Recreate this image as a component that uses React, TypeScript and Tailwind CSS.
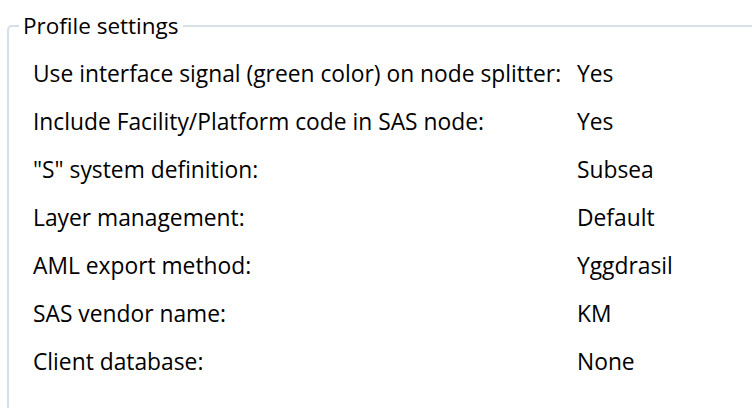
const settings = [
  { label: "Use interface signal (green color) on node splitter:", value: "Yes" },
  { label: "Include Facility/Platform code in SAS node:", value: "Yes" },
  { label: "\"S\" system definition:", value: "Subsea" },
  { label: "Layer management:", value: "Default" },
  { label: "AML export method:", value: "Yggdrasil" },
  { label: "SAS vendor name:", value: "KM" },
  { label: "Client database:", value: "None" },
];

export default function App() {
  return (
    <div
      className="w-[752px] h-[408px] overflow-hidden bg-white text-black"
      style={{ fontFamily: '"Open Sans", "Noto Sans", sans-serif' }}
    >
      <fieldset className="ml-[7px] mt-[14px] w-[800px] h-[450px] border-2 border-[#d6e0e8] rounded-[5px] pl-[10px]">
        <legend className="px-[4px] text-[22.5px] leading-[24px]">Profile settings</legend>
        <div className="grid grid-cols-[544px_1fr] ml-[14px] mt-[22px] text-[22.8px] leading-[28px]">
          {settings.map((s) => (
            <div key={s.label} className="contents">
              <div className="h-[48px]">{s.label}</div>
              <div className="h-[48px]">{s.value}</div>
            </div>
          ))}
        </div>
      </fieldset>
    </div>
  );
}
